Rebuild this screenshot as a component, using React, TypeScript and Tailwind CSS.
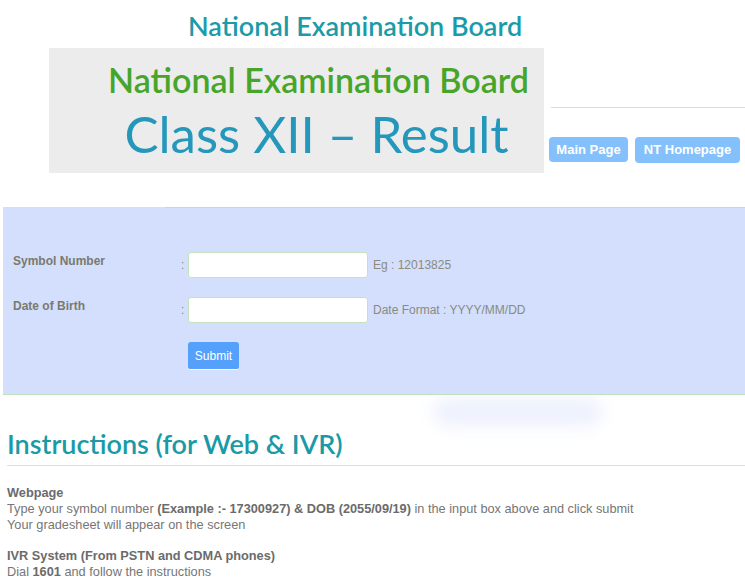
import React from "react";

const heading = { fontFamily: "Lato, 'Open Sans', sans-serif" };
const body = { fontFamily: "'Liberation Sans', Arial, sans-serif" };

function Field({ label, hint }: { label: string; hint: string }) {
  return (
    <div className="flex items-start">
      <div className="w-[178px] pl-[10px] text-[12px] font-bold text-[#7a7a6e]">{label}</div>
      <div className="flex items-center">
        <span className="w-[7px] text-[12px] text-[#8a8a80]">:</span>
        <input className="w-[180px] h-[26px] bg-white border border-[#c3e3c0] rounded-[3px] outline-none" />
        <span className="ml-[5px] text-[12px] text-[#8a8a80]">{hint}</span>
      </div>
    </div>
  );
}

export default function App() {
  return (
    <div className="w-[745px] h-[586px] overflow-hidden bg-white relative" style={body}>
      {/* HEADER */}
      <div className="h-[48px] pt-[10px] pl-[188px]">
        <h1 className="text-[27px] leading-[32px] font-semibold text-[#1b9ba9]" style={heading}>
          National Examination Board
        </h1>
      </div>

      <div className="flex">
        <div className="ml-[49px] w-[495px] h-[125px] bg-[#ececec] flex flex-col items-center">
          <div className="mt-[12px] ml-[44px] text-[34px] leading-[40px] font-semibold text-[#47a52a]" style={heading}>
            National Examination Board
          </div>
          <div className="mt-[4px] ml-[40px] text-[51px] leading-[60px] text-[#2597bb]" style={heading}>
            Class XII – Result
          </div>
        </div>
        <div className="flex-1 pl-[5px]">
          <div className="mt-[59px] ml-[2px] h-[1px] bg-[#cfdcfb]" />
          <div className="mt-[29px] flex gap-[7px]">
            <button className="w-[79px] h-[25px] rounded-[4px] bg-[#84c0fb] text-white text-[13px] font-bold">
              Main Page
            </button>
            <button className="w-[105px] h-[26px] rounded-[4px] bg-[#84c0fb] text-white text-[13px] font-bold">
              NT Homepage
            </button>
          </div>
        </div>
      </div>

      {/* FORM */}
      <div className="relative mt-[34px] ml-[3px]">
        <div className="absolute left-[430px] top-[190px] w-[170px] h-[30px] rounded-full bg-[#eef2fd] blur-[8px]" />
        <div className="relative bg-[#d3dffc] border-b border-[#bfe0bf]">
          <div className="flex">
            <div className="w-[162px]" />
            <div className="flex-1 h-[1px] bg-[#bfe0bf]" />
          </div>
          <div className="pt-[44px] pb-[24px] flex flex-col gap-[19px]">
            <Field label="Symbol Number" hint="Eg : 12013825" />
            <Field label="Date of Birth" hint="Date Format : YYYY/MM/DD" />
            <div className="pl-[185px]">
              <button className="w-[51px] h-[28px] rounded-[3px] bg-[#55a0fb] border-b border-white text-white text-[12px]">
                Submit
              </button>
            </div>
          </div>
        </div>
      </div>

      {/* INSTRUCTIONS */}
      <div className="relative mt-[33px] pl-[7px]">
        <h2 className="text-[27px] leading-[32px] font-semibold text-[#1a9aa6]" style={heading}>
          Instructions (for Web &amp; IVR)
        </h2>
        <div className="mt-[5px] h-[1px] bg-[#d6def5]" />
        <div className="mt-[19px] text-[12.75px] leading-[16px] text-[#767676]">
          <div className="font-bold text-[#6b6b6b]">Webpage</div>
          <div>
            Type your symbol number <b className="text-[#6b6b6b]">(Example :- 17300927) &amp; DOB (2055/09/19)</b> in the input box above and click submit
          </div>
          <div>Your gradesheet will appear on the screen</div>
          <div className="h-[15px]" />
          <div className="font-bold text-[#6b6b6b]">IVR System (From PSTN and CDMA phones)</div>
          <div>
            Dial <b className="text-[#6b6b6b]">1601</b> and follow the instructions
          </div>
        </div>
      </div>
    </div>
  );
}
